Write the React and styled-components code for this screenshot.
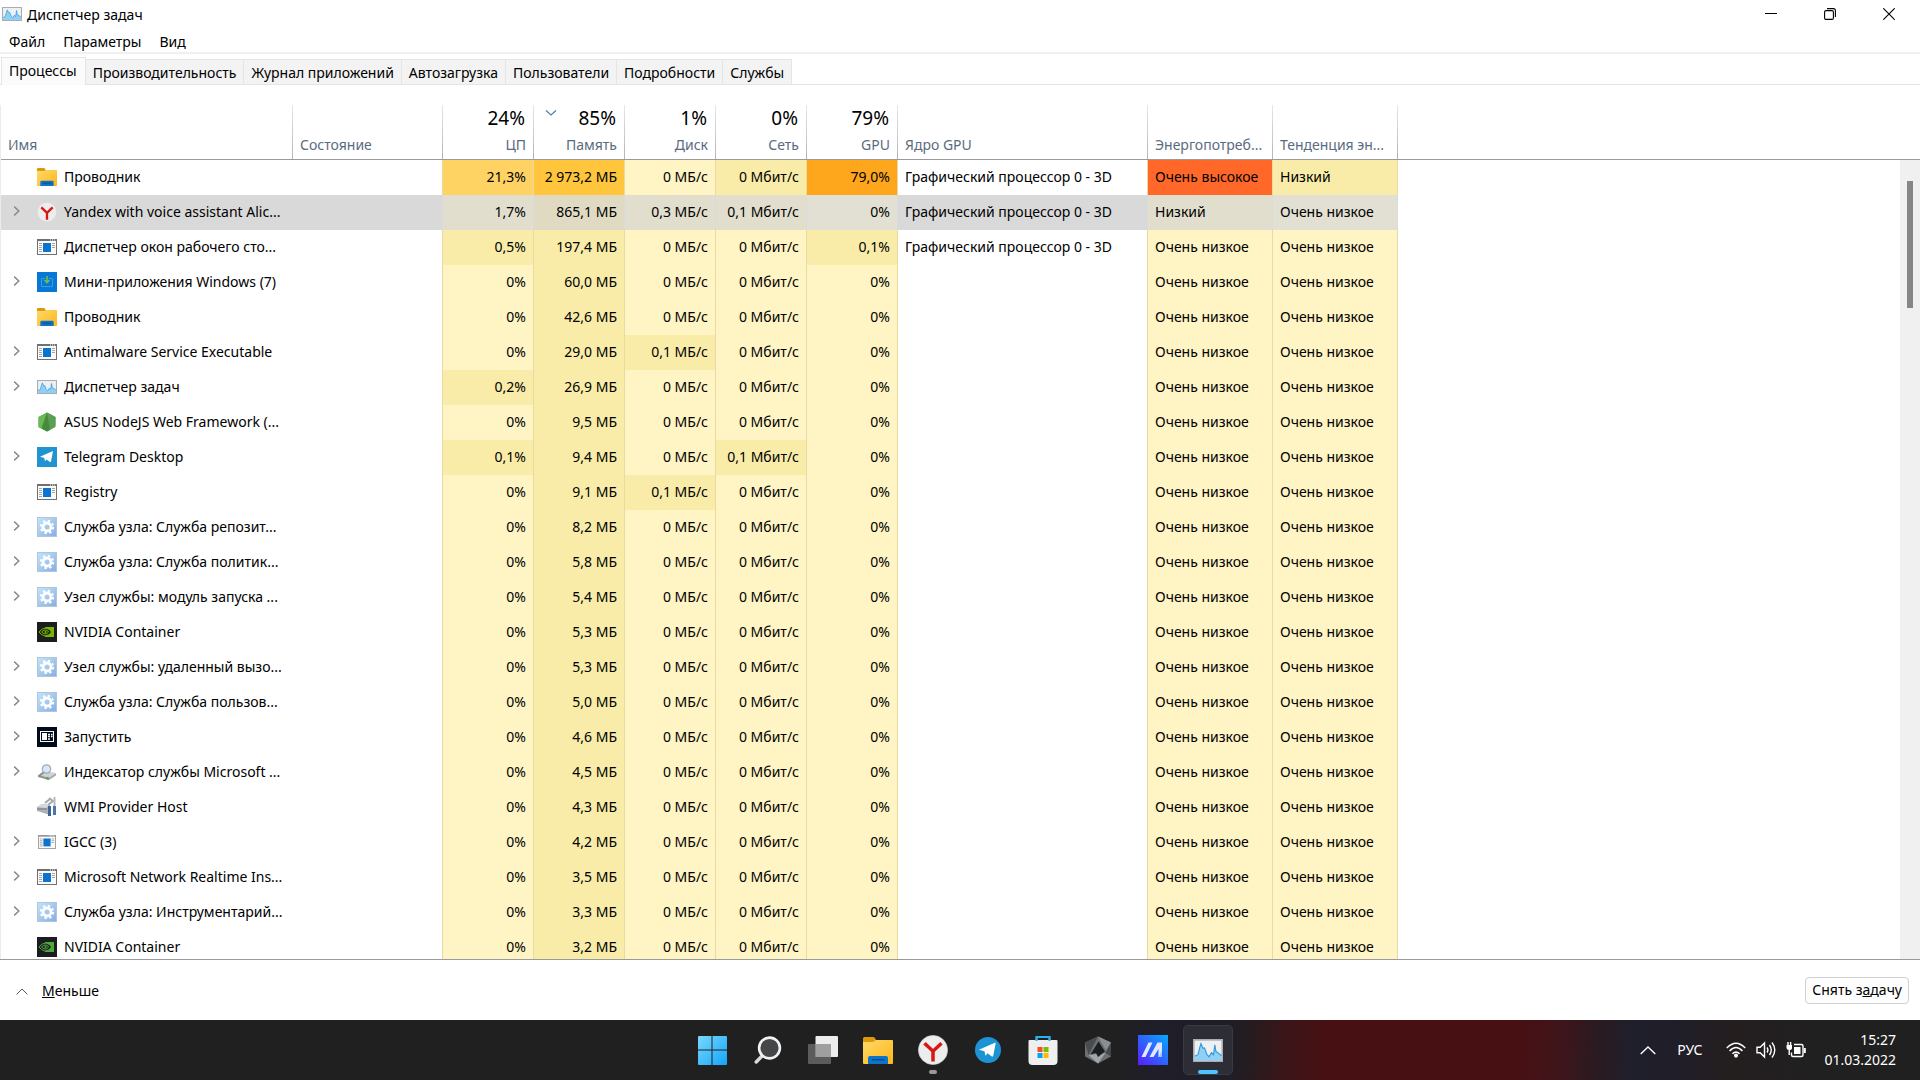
import React, { useState } from 'react';
import styled, { createGlobalStyle } from 'styled-components';

const HEAT = {
  none: 'transparent',
  low: '#fff4c4',
  mild: '#f9eca8',
  warm: '#ffd264',
  high: '#ffc53d',
  hot: '#fea61c',
  critical: '#ff6829',
};

const SELECTED_HEAT = {
  none: '#d9d9d9',
  low: '#e2e0d3',
  mild: '#e1decd',
  warm: '#e1dac2',
};

const TABS = [
  'Процессы',
  'Производительность',
  'Журнал приложений',
  'Автозагрузка',
  'Пользователи',
  'Подробности',
  'Службы',
];

const COLUMNS = [
  { label: 'Имя', width: 292 },
  { label: 'Состояние', width: 150 },
  { label: 'ЦП', total: '24%', width: 91, numeric: true },
  { label: 'Память', total: '85%', width: 91, numeric: true, sorted: true },
  { label: 'Диск', total: '1%', width: 91, numeric: true },
  { label: 'Сеть', total: '0%', width: 91, numeric: true },
  { label: 'GPU', total: '79%', width: 91, numeric: true },
  { label: 'Ядро GPU', width: 250 },
  { label: 'Энергопотреб...', width: 125 },
  { label: 'Тенденция эн...', width: 125 },
];

const CORE = 'Графический процессор 0 - 3D';

const PROCESSES = [
  { icon: 'folder', name: 'Проводник', cpu: '21,3%', memory: '2 973,2 МБ', gpu: '79,0%', core: CORE, power: 'Очень высокое', trend: 'Низкий',
    heat: { cpu: 'warm', memory: 'high', net: 'mild', gpu: 'hot', power: 'critical', trend: 'mild' } },
  { icon: 'yandex', name: 'Yandex with voice assistant Alic...', group: true, cpu: '1,7%', memory: '865,1 МБ', disk: '0,3 МБ/с', net: '0,1 Мбит/с', core: CORE, power: 'Низкий',
    heat: { cpu: 'mild', memory: 'warm', disk: 'mild', net: 'mild', power: 'mild' } },
  { icon: 'app', name: 'Диспетчер окон рабочего сто...', cpu: '0,5%', memory: '197,4 МБ', gpu: '0,1%', core: CORE, heat: { cpu: 'mild', gpu: 'mild' } },
  { icon: 'widgets', name: 'Мини-приложения Windows (7)', group: true, memory: '60,0 МБ' },
  { icon: 'folder', name: 'Проводник', memory: '42,6 МБ' },
  { icon: 'app', name: 'Antimalware Service Executable', group: true, memory: '29,0 МБ', disk: '0,1 МБ/с', heat: { disk: 'mild' } },
  { icon: 'monitor', name: 'Диспетчер задач', group: true, cpu: '0,2%', memory: '26,9 МБ', heat: { cpu: 'mild' } },
  { icon: 'node', name: 'ASUS NodeJS Web Framework (...', memory: '9,5 МБ' },
  { icon: 'telegram', name: 'Telegram Desktop', group: true, cpu: '0,1%', memory: '9,4 МБ', net: '0,1 Мбит/с', heat: { cpu: 'mild', net: 'mild' } },
  { icon: 'app', name: 'Registry', memory: '9,1 МБ', disk: '0,1 МБ/с', heat: { disk: 'mild' } },
  { icon: 'service', name: 'Служба узла: Служба репозит...', group: true, memory: '8,2 МБ' },
  { icon: 'service', name: 'Служба узла: Служба политик...', group: true, memory: '5,8 МБ' },
  { icon: 'service', name: 'Узел службы: модуль запуска ...', group: true, memory: '5,4 МБ' },
  { icon: 'nvidia', name: 'NVIDIA Container', memory: '5,3 МБ' },
  { icon: 'service', name: 'Узел службы: удаленный вызо...', group: true, memory: '5,3 МБ' },
  { icon: 'service', name: 'Служба узла: Служба пользов...', group: true, memory: '5,0 МБ' },
  { icon: 'launch', name: 'Запустить', group: true, memory: '4,6 МБ' },
  { icon: 'indexer', name: 'Индексатор службы Microsoft ...', group: true, memory: '4,5 МБ' },
  { icon: 'wmi', name: 'WMI Provider Host', memory: '4,3 МБ' },
  { icon: 'appSmall', name: 'IGCC (3)', group: true, memory: '4,2 МБ' },
  { icon: 'app', name: 'Microsoft Network Realtime Ins...', group: true, memory: '3,5 МБ' },
  { icon: 'service', name: 'Служба узла: Инструментарий...', group: true, memory: '3,3 МБ' },
  { icon: 'nvidiaAlt', name: 'NVIDIA Container', memory: '3,2 МБ' },
];

// metric columns with the values an idle process shows
const METRICS = [
  { key: 'cpu', idle: '0%', heat: 'low' },
  { key: 'memory', idle: '0 МБ', heat: 'mild' },
  { key: 'disk', idle: '0 МБ/с', heat: 'low' },
  { key: 'net', idle: '0 Мбит/с', heat: 'low' },
  { key: 'gpu', idle: '0%', heat: 'low' },
];

const MonitorIcon = ({ width = 20, height = 14 }) => (
  <svg width={width} height={height} viewBox="0 0 30 22" preserveAspectRatio="none">
    <rect x="0.8" y="0.8" width="28.4" height="20.4" fill="#eef1f4" stroke="#a9adb1" strokeWidth="1.6" />
    <path d="M1.6 17 L5 15.5 L6.5 9 L8 4.5 L10 9 L11.5 8.5 L14 15 L16 17 L18.5 13 L20.5 15 L21.8 5.5 L23 12 L25.5 13.5 L28.4 16 V20.4 H1.6Z" fill="#8fd0f5" />
    <path d="M1.6 16.5 L5 15 L6.5 9 L8 4.5 L10 9 L11.5 8.5 L14 15 L16 17 L18.5 13 L20.5 15 L21.8 5.5 L23 12 L25.5 13.5 L28.4 16" fill="none" stroke="#3296d8" strokeWidth="1.1" />
  </svg>
);

const FolderIcon = ({ width = 20, height = 18 }) => (
  <svg width={width} height={height} viewBox="0 0 30 27" preserveAspectRatio="none">
    <defs>
      <linearGradient id="folder" x1="0" y1="0" x2="1" y2="1">
        <stop offset="0" stopColor="#ffd968" />
        <stop offset="1" stopColor="#fdb71b" />
      </linearGradient>
    </defs>
    <path d="M0 1.5 Q0 0 1.5 0 H10 Q12 0 12.5 2 L14 5 H0Z" fill="#dd9a08" />
    <path d="M0 5 H10 L13 3 H29 Q30 3 30 4 V26 Q30 27 29 27 H1 Q0 27 0 26Z" fill="url(#folder)" />
    <path d="M5 27 V21 Q5 19 7 19 H23 Q25 19 25 21 V27Z" fill="#0f73c8" />
    <path d="M9 22.8 H21.5" stroke="#064a8c" strokeWidth="1.4" />
  </svg>
);

const YandexIcon = ({ size = 20 }) => (
  <svg width={size} height={size} viewBox="0 0 30 30">
    <circle cx="15" cy="15" r="14.6" fill="#ededed" stroke="#d2d2d2" strokeWidth="0.6" />
    <path d="M6.5 8.2 L15 16.2 L23.5 8.2 M15 16 V26.5" fill="none" stroke="#d81712" strokeWidth="3.5" />
  </svg>
);

const AppIcon = ({ small }) => (
  <svg width={small ? 18 : 20} height={small ? 14 : 16} viewBox="0 0 20 16" preserveAspectRatio="none">
    <rect x="0.5" y="0.5" width="19" height="15" fill="#fafafa" stroke={small ? '#9a9a9a' : '#707070'} />
    <path d="M0 1 H20" stroke={small ? '#9a9a9a' : '#707070'} strokeWidth="2" />
    <path d="M13 1 H14 M15 1 H16 M17 1 H18" stroke="#ffffff" />
    <path d="M2 4.5 H5 M2 6.5 H5 M2 8.5 H5 M2 10.5 H5 M2 12.5 H5 M15 4.5 H18 M15 6.5 H18 M15 8.5 H18" stroke="#a5a5a5" />
    <rect x="6" y="4" width="8" height="9" fill="#0b74d0" />
  </svg>
);

const TelegramPlane = () => (
  <path d="M4.5 14.6 L23 6.5 Q24 6.3 23.8 7.5 L21 21.8 Q20.7 23 19.5 22.4 L14.4 18.7 L12 21.5 L11 16.5Z" fill="#ffffff" />
);

const NvidiaIcon = ({ color }) => (
  <svg width="20" height="20" viewBox="0 0 20 20">
    <rect width="20" height="20" fill="#1c1d1e" />
    <rect x="8" y="5" width="9" height="10" fill={color} />
    <path d="M2 10 Q5 6 9 6 Q13 7 14.5 10 Q12 14 8 14 Q4 13 2 10Z" fill="#1c1d1e" stroke={color} />
    <path d="M4.5 10 Q7 7.5 9 8 Q11.5 9 11.5 10 Q10 12.2 8 12 Q6 11.5 4.5 10Z" fill="none" stroke={color} />
    <circle cx="8.5" cy="10" r="1" fill={color} />
  </svg>
);

const ICONS = {
  folder: <FolderIcon />,
  yandex: <YandexIcon />,
  app: <AppIcon />,
  appSmall: <AppIcon small />,
  monitor: <MonitorIcon />,
  nvidia: <NvidiaIcon color="#76b900" />,
  nvidiaAlt: <NvidiaIcon color="#4fa83d" />,
  widgets: (
    <svg width="20" height="20" viewBox="0 0 20 20">
      <rect width="20" height="20" fill="#0878d6" />
      <path d="M8 6.5 H4.5 V14.5 H15.5 V6.5 H12" fill="none" stroke="#3d9be0" />
      <path d="M10 4 V10 M7.5 8 L10 10.5 L12.5 8" fill="none" stroke="#6cc04a" strokeWidth="1.6" />
    </svg>
  ),
  node: (
    <svg width="20" height="20" viewBox="0 0 20 20">
      <path d="M10 0.5 L18.5 5 V15 L10 19.5 L1.5 15 V5Z" fill="#56a04a" />
      <path d="M10 0.5 L1.5 5 V15 L4.5 16.6Z" fill="#6cb857" />
      <path d="M10 0.5 L18.5 5 V13 L12 18.4Z" fill="#5b9e55" />
      <path d="M10 0.5 L4.5 16.6 L10 19.5 L13 17.8Z" fill="#458b3c" />
    </svg>
  ),
  telegram: (
    <svg width="20" height="20" viewBox="0 0 30 30">
      <rect width="30" height="30" fill="#2193d1" />
      <TelegramPlane />
    </svg>
  ),
  service: (
    <svg width="20" height="20" viewBox="0 0 20 20">
      <defs>
        <linearGradient id="service" x1="0" y1="0" x2="1" y2="1">
          <stop offset="0" stopColor="#c3e6fa" />
          <stop offset="1" stopColor="#86ade6" />
        </linearGradient>
      </defs>
      <rect x="0.5" y="0.5" width="19" height="19" fill="url(#service)" stroke="#b2c6d8" />
      <circle cx="10" cy="10" r="4" fill="none" stroke="#ffffff" strokeWidth="2.8" />
      <circle cx="10" cy="10" r="6.2" fill="none" stroke="#ffffff" strokeWidth="2" strokeDasharray="2.4 2.469" />
    </svg>
  ),
  launch: (
    <svg width="20" height="20" viewBox="0 0 20 20">
      <rect width="20" height="20" fill="#010b1c" />
      <rect x="3.5" y="4.5" width="13" height="10" fill="none" stroke="#ffffff" />
      <rect x="5" y="6" width="5" height="7" fill="#ffffff" />
      <path d="M11 7.5 H13 M14 7.5 H15.5 M11 9.5 H13 M14 9.5 H15.5 M11 12 H13" stroke="#ffffff" strokeWidth="1.4" />
    </svg>
  ),
  indexer: (
    <svg width="20" height="16" viewBox="0 0 20 16">
      <path d="M1 11 L8 7 L19 9 L12 13.5Z" fill="#d0d2d4" />
      <path d="M1 11 L12 13.5 V16 L1 13Z" fill="#8f9396" />
      <path d="M12 13.5 L19 9 V11.5 L12 16Z" fill="#a9adb0" />
      <rect x="9.5" y="13" width="2" height="2.5" fill="#3bb53b" />
      <path d="M7 8 L1.5 12.5" stroke="#8c9094" strokeWidth="2" />
      <circle cx="9.5" cy="5" r="4.2" fill="#d6e8f8" stroke="#a3abb3" strokeWidth="1.2" />
    </svg>
  ),
  wmi: (
    <svg width="20" height="20" viewBox="0 0 20 20">
      <path d="M0 10 L5 7 L13 8 V18 L0 14Z" fill="#aeb3b8" />
      <path d="M0 10 L5 7 L13 8 L9 11Z" fill="#d6d9dc" />
      <path d="M0 12 H10" stroke="#70767c" />
      <path d="M8 6 L13 2 M12 1 L16 4 L11 8" fill="none" stroke="#a4a9ae" strokeWidth="2" />
      <rect x="11" y="9" width="3" height="10" fill="#3d6694" />
      <path d="M17.5 0 V10" stroke="#b5babf" strokeWidth="2" />
      <rect x="16" y="9" width="3" height="9" fill="#4b78a8" />
    </svg>
  ),
};

const TASKBAR_APPS = [
  {
    label: 'Пуск',
    icon: (
      <svg width="29" height="29" viewBox="1 1 29 29">
        <defs>
          <linearGradient id="start" x1="0" y1="0" x2="1" y2="1">
            <stop offset="0" stopColor="#7bd8fb" />
            <stop offset="1" stopColor="#12a5fb" />
          </linearGradient>
        </defs>
        <path d="M1 2 Q1 1 2 1 H14.5 V14.5 H1Z M15.5 1 H29 Q30 1 30 2 V14.5 H15.5Z M1 15.5 H14.5 V30 H2 Q1 30 1 29Z M15.5 15.5 H30 V29 Q30 30 29 30 H15.5Z" fill="url(#start)" />
      </svg>
    ),
  },
  {
    label: 'Поиск',
    icon: (
      <svg width="28" height="28" viewBox="0 0 28 28">
        <path d="M8.5 19.5 L2.2 26" stroke="#d9d9d9" strokeWidth="3.4" strokeLinecap="round" />
        <circle cx="15.5" cy="12" r="10.4" fill="#454748" stroke="#f2f2f2" strokeWidth="2.6" />
      </svg>
    ),
  },
  {
    label: 'Представление задач',
    icon: (
      <svg width="30" height="28" viewBox="0 0 30 28">
        <rect x="7.5" y="0" width="22.5" height="21" rx="1" fill="#ededed" />
        <rect x="0" y="8" width="23" height="20" rx="1" fill="#6b6b6b" fillOpacity="0.8" />
        <rect x="7.5" y="8" width="15.5" height="13" fill="#9f9f9f" />
      </svg>
    ),
  },
  { label: 'Проводник', icon: <FolderIcon width={30} height={27} /> },
  { label: 'Яндекс', icon: <YandexIcon size={30} />, running: true },
  {
    label: 'Telegram',
    icon: (
      <svg width="26" height="26" viewBox="0 0 30 30">
        <circle cx="15" cy="15" r="15" fill="#1d93d4" />
        <TelegramPlane />
      </svg>
    ),
  },
  {
    label: 'Microsoft Store',
    icon: (
      <svg width="30" height="30" viewBox="0 0 30 30">
        <path d="M8.5 7 V2 H21.5 V7" fill="none" stroke="#2bb0ee" strokeWidth="2" />
        <path d="M0.5 6 Q0.5 5 1.5 5 H28.5 Q29.5 5 29.5 6 V26 Q29.5 30 25.5 30 H4.5 Q0.5 30 0.5 26Z" fill="#efefef" />
        <path d="M8.5 6 V1.5 M21.5 6 V1.5" stroke="#2bb0ee" strokeWidth="2" />
        <rect x="9.5" y="12" width="5" height="5" fill="#f25022" />
        <rect x="15.5" y="12" width="5" height="5" fill="#7fba00" />
        <rect x="9.5" y="18" width="5" height="5" fill="#00a4ef" />
        <rect x="15.5" y="18" width="5" height="5" fill="#ffb900" />
      </svg>
    ),
  },
  {
    label: 'Armoury Crate',
    icon: (
      <svg width="28" height="28" viewBox="0 0 28 28">
        <path d="M14 0.5 L27 6.5 V20.5 L14 27.5 L1 20.5 V6.5Z" fill="#6d7073" />
        <path d="M14 0.5 L1 6.5 L4.5 19Z" fill="#4a4d50" />
        <path d="M14 0.5 L27 6.5 L22 14Z" fill="#8c8f92" />
        <path d="M27 6.5 V20.5 L21.5 17Z" fill="#45484b" />
        <path d="M4.5 19 L14 27.5 L21.5 17Z" fill="#a2a5a7" />
        <path d="M14.5 5.5 L6.5 18.5 L12 17 L14 21 L21 15.5Z" fill="#1c1d1f" />
      </svg>
    ),
  },
  {
    label: 'MyASUS',
    icon: (
      <svg width="30" height="30" viewBox="0 0 30 30">
        <defs>
          <linearGradient id="asus" x1="1" y1="0" x2="0" y2="1">
            <stop offset="0" stopColor="#04aaff" />
            <stop offset="1" stopColor="#5a1cff" />
          </linearGradient>
        </defs>
        <rect width="30" height="30" fill="url(#asus)" />
        <path d="M3.5 22 L10.5 7.5 H14.5 L7.5 22Z M11.5 22 L19.5 7.5 H24 V22 H20.5 V14 L15.5 22Z" fill="#dfe8ff" />
        <path d="M20.5 22 L24 16 V22Z" fill="#9fc3ff" />
      </svg>
    ),
  },
  { label: 'Диспетчер задач', icon: <MonitorIcon width={30} height={23} />, active: true },
];

const App = () => {
  const [tab, setTab] = useState(TABS[0]);
  const [selected, setSelected] = useState(1);

  return (
    <>
      <GlobalStyle />
      <Desktop>
        <Window>
          <TitleBar>
            <MonitorIcon />
            <Title>Диспетчер задач</Title>
            <WindowButton aria-label="Свернуть">
              <svg width="12" height="12" viewBox="0 0 12 12">
                <path d="M0 5.5 H12" stroke="#000000" />
              </svg>
            </WindowButton>
            <WindowButton aria-label="Восстановить">
              <svg width="12" height="12" viewBox="0 0 12 12" fill="none" stroke="#000000" strokeWidth="1.1">
                <rect x="0.6" y="2.6" width="8.8" height="8.8" rx="1.4" />
                <path d="M3 0.6 H9.4 Q11.4 0.6 11.4 2.6 V9" />
              </svg>
            </WindowButton>
            <WindowButton aria-label="Закрыть">
              <svg width="12" height="12" viewBox="0 0 12 12">
                <path d="M0.3 0.3 L11.7 11.7 M11.7 0.3 L0.3 11.7" stroke="#000000" strokeWidth="1.1" />
              </svg>
            </WindowButton>
          </TitleBar>

          <MenuBar>
            <MenuItem>Файл</MenuItem>
            <MenuItem>Параметры</MenuItem>
            <MenuItem>Вид</MenuItem>
          </MenuBar>

          <TabBar role="tablist">
            {TABS.map((name) => (
              <Tab key={name} role="tab" aria-selected={name === tab} $active={name === tab} onClick={() => setTab(name)}>
                {name}
              </Tab>
            ))}
          </TabBar>

          <Page>
            <TableArea>
              <Table>
                <colgroup>
                  {COLUMNS.map((column) => (
                    <Col key={column.label} $width={column.width} />
                  ))}
                  <col />
                </colgroup>
                <thead>
                  <tr>
                    {COLUMNS.map((column) => (
                      <HeaderCell key={column.label} $numeric={column.numeric}>
                        {column.sorted && (
                          <SortMark width="12" height="6" viewBox="0 0 12 6">
                            <path d="M1 0.5 L6 5 L11 0.5" fill="none" stroke="#4d7ea8" strokeWidth="1.2" />
                          </SortMark>
                        )}
                        {column.total && <Total>{column.total}</Total>}
                        <Label>{column.label}</Label>
                      </HeaderCell>
                    ))}
                    <HeaderFiller />
                  </tr>
                </thead>
                <tbody>
                  {PROCESSES.map((process, index) => (
                    <ProcessRow
                      key={index}
                      process={process}
                      selected={index === selected}
                      onSelect={() => setSelected(index)}
                    />
                  ))}
                </tbody>
              </Table>
            </TableArea>
            <ScrollColumn>
              <ScrollHead />
              <ScrollTrack>
                <ScrollThumb />
              </ScrollTrack>
            </ScrollColumn>
          </Page>

          <Footer>
            <LessButton>
              <svg width="12" height="7" viewBox="0 0 12 7">
                <path d="M0.5 6.5 L6 1 L11.5 6.5" fill="none" stroke="#555555" />
              </svg>
              <span><u>М</u>еньше</span>
            </LessButton>
            <EndTaskButton>Снять з<u>а</u>дачу</EndTaskButton>
          </Footer>
        </Window>

        <Taskbar>
          <Apps>
            {TASKBAR_APPS.map((app) => (
              <AppButton key={app.label} aria-label={app.label} $active={app.active} $running={app.running}>
                {app.icon}
              </AppButton>
            ))}
          </Apps>
          <Tray>
            <svg width="16" height="9" viewBox="0 0 16 9">
              <path d="M0.7 8 L8 1 L15.3 8" fill="none" stroke="#ffffff" strokeWidth="1.4" />
            </svg>
            <Language>РУС</Language>
            <TrayIcons>
              <svg width="20" height="16" viewBox="0 0 20 16" fill="none" stroke="#ffffff" strokeWidth="1.5">
                <path d="M0.8 6 Q10 -3.5 19.2 6" />
                <path d="M3.6 9 Q10 2 16.4 9" />
                <path d="M6.4 11.8 Q10 8 13.6 11.8" />
                <circle cx="10" cy="13.6" r="1.3" fill="#ffffff" />
              </svg>
              <svg width="20" height="18" viewBox="0 0 20 18" fill="none" stroke="#ffffff" strokeWidth="1.4">
                <path d="M1 6.2 H4.2 L8.5 2 V16 L4.2 11.8 H1Z" />
                <path d="M11 6.5 Q12.8 9 11 11.5 M13.5 4 Q17 9 13.5 14 M16 1.5 Q21.5 9 16 16.5" />
              </svg>
              <svg width="20" height="16" viewBox="0 0 20 16" fill="none" stroke="#ffffff" strokeWidth="1.4">
                <path d="M8 2.5 H15.5 Q17 2.5 17 4 V13 Q17 14.5 15.5 14.5 H7 Q5.5 14.5 5.5 13 V10.5" />
                <rect x="8" y="5" width="6.5" height="7" fill="#ffffff" stroke="none" />
                <path d="M18.8 6 V11" strokeWidth="2" />
                <path d="M0.5 3 H6 V6 Q6 8 3.2 8 Q0.5 8 0.5 6Z" fill="#ffffff" stroke="none" />
                <path d="M2 0 V3 M4.6 0 V3 M3.2 8 V13" />
              </svg>
            </TrayIcons>
            <Clock>
              <span>15:27</span>
              <span>01.03.2022</span>
            </Clock>
          </Tray>
        </Taskbar>
      </Desktop>
    </>
  );
};

const ProcessRow = ({ process, selected, onSelect }) => {
  const heat = process.heat || {};

  return (
    <Row onClick={onSelect}>
      <Cell $heat="none" $selected={selected}>
        <NameContent>
          <Expander>
            {process.group && (
              <ExpandButton aria-label={`Развернуть ${process.name}`}>
                <svg width="8" height="10" viewBox="0 0 8 10">
                  <path d="M1.2 0.6 L5.8 5 L1.2 9.4" fill="none" stroke="#8a8a8a" strokeWidth="1.5" />
                </svg>
              </ExpandButton>
            )}
          </Expander>
          <IconSlot>{ICONS[process.icon]}</IconSlot>
          {process.name}
        </NameContent>
      </Cell>
      <Cell $heat="none" $selected={selected} $divider />
      {METRICS.map((metric) => (
        <Cell key={metric.key} $heat={heat[metric.key] || metric.heat} $selected={selected} $numeric $divider>
          {process[metric.key] || metric.idle}
        </Cell>
      ))}
      <Cell $heat="none" $selected={selected} $divider>{process.core}</Cell>
      <Cell $heat={heat.power || 'low'} $selected={selected} $divider>{process.power || 'Очень низкое'}</Cell>
      <Cell $heat={heat.trend || 'low'} $selected={selected} $divider>{process.trend || 'Очень низкое'}</Cell>
      <td />
    </Row>
  );
};

export default App;

const GlobalStyle = createGlobalStyle`
  * {
    box-sizing: border-box;
  }

  body {
    margin: 0;
    font-family: 'Noto Sans', 'Open Sans', sans-serif;
    font-size: 14px;
    line-height: 20px;
    color: #000000;
  }

  button {
    padding: 0;
    border: none;
    background: none;
    font: inherit;
    color: inherit;
  }

  svg {
    display: block;
    flex: none;
  }
`;

const Desktop = styled.div`
  display: flex;
  flex-direction: column;
  height: 100vh;
`;

const Window = styled.main`
  display: flex;
  flex-direction: column;
  flex: 1;
  min-height: 0;
  background: #ffffff;
`;

const TitleBar = styled.header`
  display: flex;
  align-items: center;
  height: 28px;
  padding: 0 2px;
`;

const Title = styled.h1`
  flex: 1;
  margin: 0;
  padding: 1px 0 0 5px;
  font-size: 14px;
  font-weight: 400;
`;

const WindowButton = styled.button`
  display: flex;
  align-items: center;
  justify-content: center;
  width: 59px;
  height: 28px;
`;

const MenuBar = styled.nav`
  display: flex;
  align-items: center;
  height: 26px;
  border-bottom: 2px solid #f0f0f0;
`;

const MenuItem = styled.button`
  padding: 4px 9px 0;
`;

const TabBar = styled.div`
  display: flex;
  align-items: flex-end;
  height: 31px;
  padding-left: 1px;
  border-bottom: 1px solid #e5e5e5;
`;

const Tab = styled.button`
  height: ${(props) => (props.$active ? '28px' : '25px')};
  margin-bottom: ${(props) => (props.$active ? '-1px' : '0')};
  padding: ${(props) => (props.$active ? '0 8px 1px 7px' : '1px 7px 0')};
  background: ${(props) => (props.$active ? '#fbfbfb' : '#f3f3f3')};
  border: solid #e5e5e5;
  border-width: ${(props) => (props.$active ? '1px 1px 0' : '1px 1px 0 0')};
  white-space: nowrap;
`;

const Page = styled.section`
  display: flex;
  flex: 1;
  min-height: 0;
  padding-top: 20px;
`;

const TableArea = styled.div`
  flex: 1;
  min-width: 0;
  overflow: hidden;
`;

const Table = styled.table`
  width: 100%;
  table-layout: fixed;
  border-collapse: separate;
  border-spacing: 0;
  border-left: 1px solid #ececec;
`;

const Col = styled.col`
  width: ${(props) => props.$width}px;
`;

const HeaderCell = styled.th`
  position: relative;
  height: 55px;
  padding: 0 8px 4px 7px;
  vertical-align: bottom;
  text-align: ${(props) => (props.$numeric ? 'right' : 'left')};
  font-weight: 400;
  white-space: nowrap;
  border-bottom: 1px solid #9a9a9a;
  background: linear-gradient(#e8e8e8, #b4b4b4) right / 1px 100% no-repeat;
`;

const HeaderFiller = styled.td`
  border-bottom: 1px solid #9a9a9a;
`;

const SortMark = styled.svg`
  position: absolute;
  top: 5px;
  left: 11px;
`;

const Total = styled.div`
  padding: 0 1px 5px 0;
  font-size: 19px;
  line-height: 24px;
`;

const Label = styled.div`
  color: #5a6b80;
`;

const Row = styled.tr`
  height: 35px;
`;

const Cell = styled.td`
  padding: ${(props) => (props.$numeric ? '0 7px 1px 0' : '0 0 1px 7px')};
  text-align: ${(props) => (props.$numeric ? 'right' : 'left')};
  white-space: nowrap;
  background: ${(props) => (props.$selected ? SELECTED_HEAT : HEAT)[props.$heat]};
  border-right: ${(props) => (props.$divider ? `1px solid ${props.$selected ? '#d9dcdd' : '#ead9a0'}` : 'none')};
`;

const NameContent = styled.div`
  display: flex;
  align-items: center;
`;

const Expander = styled.span`
  display: flex;
  width: 29px;
  padding: 0 0 2px 5px;
`;

const ExpandButton = styled.button`
  display: flex;
`;

const IconSlot = styled.span`
  display: flex;
  justify-content: center;
  width: 20px;
  margin-right: 7px;
`;

const ScrollColumn = styled.div`
  display: flex;
  flex-direction: column;
  width: 20px;
`;

const ScrollHead = styled.div`
  height: 55px;
  border-bottom: 1px solid #9a9a9a;
`;

const ScrollTrack = styled.div`
  flex: 1;
  padding: 21px 7px 0;
  background: #f0f0f0;
`;

const ScrollThumb = styled.div`
  width: 6px;
  height: 127px;
  background: #868686;
`;

const Footer = styled.footer`
  display: flex;
  align-items: center;
  justify-content: space-between;
  height: 61px;
  padding: 0 11px 0 16px;
  border-top: 1px solid #9a9a9a;
`;

const LessButton = styled.button`
  display: flex;
  align-items: center;
  gap: 14px;
  padding-top: 2px;
`;

const EndTaskButton = styled.button`
  height: 27px;
  padding: 0 6px;
  background: #fdfdfd;
  border: 1px solid #d0d0d0;
  border-radius: 4px;
`;

const Taskbar = styled.footer`
  display: grid;
  grid-template-columns: 1fr auto 1fr;
  align-items: center;
  height: 60px;
  color: #ffffff;
  background: linear-gradient(
    92deg,
    #202020 58%,
    #1f1e29 60%,
    #1f1e27 64%,
    #251c1f 65%,
    #3b1519 67%,
    #471012 69%,
    #471012 79%,
    #40141a 81%,
    #2b1a20 83%,
    #1f1f2b 85%,
    #1f1e29 87%,
    #241e1f 90%,
    #202020 95%
  );
`;

const Apps = styled.nav`
  grid-column: 2;
  display: flex;
  gap: 5px;
`;

const AppButton = styled.button`
  position: relative;
  display: flex;
  align-items: center;
  justify-content: center;
  width: 50px;
  height: 50px;
  border: 1px solid ${(props) => (props.$active ? '#3a3a42' : 'transparent')};
  border-radius: 5px;
  background: ${(props) => (props.$active ? '#2d2d35' : 'transparent')};

  &::after {
    content: '';
    display: ${(props) => (props.$active || props.$running ? 'block' : 'none')};
    position: absolute;
    bottom: 0;
    width: ${(props) => (props.$active ? '20px' : '8px')};
    height: 4px;
    border-radius: 2px;
    background: ${(props) => (props.$active ? '#4cc2ff' : '#9a9a9a')};
  }
`;

const Tray = styled.div`
  display: flex;
  align-items: center;
  justify-content: flex-end;
  padding-right: 24px;
`;

const Language = styled.span`
  margin: 0 24px 0 21px;
`;

const TrayIcons = styled.div`
  display: flex;
  align-items: center;
  gap: 10px;
`;

const Clock = styled.time`
  display: flex;
  flex-direction: column;
  margin-left: 18px;
  text-align: right;
`;
